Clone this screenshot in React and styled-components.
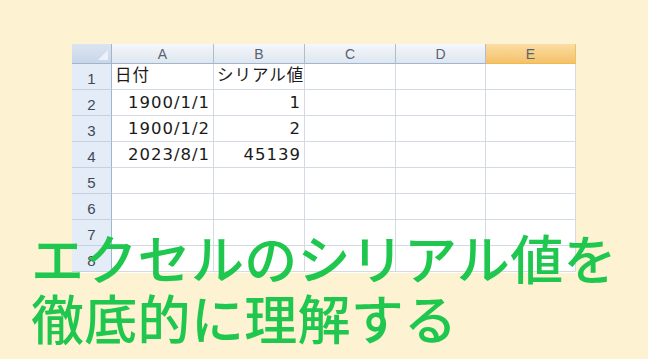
import React from "react"
import styled, { createGlobalStyle } from "styled-components"

const columns = ["A", "B", "C", "D", "E"]
const widths = [40, 102, 91, 91, 90, 90]

const rows = [
  [{ v: "日付" }, { v: "シリアル値" }],
  [{ v: "1900/1/1", right: true }, { v: "1", right: true }],
  [{ v: "1900/1/2", right: true }, { v: "2", right: true }],
  [{ v: "2023/8/1", right: true }, { v: "45139", right: true }],
  [],
  [],
  [],
  [],
]

const GlobalStyle = createGlobalStyle`
  body {
    margin: 0;
    background: #fdf3d3;
  }
`

export default function App() {
  return (
    <>
      <GlobalStyle />
      <Page>
        <Sheet>
          <Corner>
            <CornerMark />
          </Corner>
          {columns.map((c) => (
            <ColHead key={c} $active={c === "E"}>
              {c}
            </ColHead>
          ))}
          {rows.map((r, i) => (
            <React.Fragment key={i}>
              <RowHead>{i + 1}</RowHead>
              {columns.map((c, j) => (
                <Cell key={c} $right={r[j] && r[j].right}>
                  {r[j] ? r[j].v : ""}
                </Cell>
              ))}
            </React.Fragment>
          ))}
        </Sheet>
        <Title>
          エクセルのシリアル値を
          <br />
          徹底的に理解する
        </Title>
      </Page>
    </>
  )
}

const Page = styled.div`
  position: relative;
  width: 648px;
  height: 359px;
  padding: 44px 0 0 72px;
  box-sizing: border-box;
  overflow: hidden;
  background: #fdf3d3;
`

const Sheet = styled.div`
  display: grid;
  grid-template-columns: ${widths.map((w) => w + "px").join(" ")};
  grid-template-rows: 20px repeat(8, 26px);
  width: 504px;
  height: 229px;
  overflow: hidden;
  background: #fff;
  font-family: "Liberation Sans", "Noto Sans CJK JP", sans-serif;
`

const Corner = styled.div`
  position: relative;
  background: linear-gradient(#dbe4f1, #c9d6e8);
  border-right: 1px solid #9eb6ce;
  border-bottom: 1px solid #9eb6ce;
`

const CornerMark = styled.div`
  position: absolute;
  right: 3px;
  bottom: 3px;
  width: 0;
  height: 0;
  border-left: 10px solid transparent;
  border-bottom: 10px solid #eef2f8;
`

const ColHead = styled.div`
  display: flex;
  align-items: center;
  justify-content: center;
  font-size: 14px;
  color: #5a6270;
  background: ${(p) =>
    p.$active
      ? "linear-gradient(#fbdca3, #f3c26a)"
      : "linear-gradient(#f4f7fb, #dfe6ef)"};
  border-right: 1px solid ${(p) => (p.$active ? "#f1c15f" : "#b2bccb")};
  border-bottom: 1px solid ${(p) => (p.$active ? "#f2b84e" : "#9eb6ce")};
`

const RowHead = styled.div`
  display: flex;
  align-items: flex-end;
  justify-content: center;
  padding-bottom: 2px;
  font-size: 15px;
  color: #404856;
  background: #e4ecf7;
  border-right: 1px solid #9eb6ce;
  border-bottom: 1px solid #c5d1e2;
`

const Cell = styled.div`
  display: flex;
  align-items: flex-end;
  justify-content: ${(p) => (p.$right ? "flex-end" : "flex-start")};
  padding: 0 3px 3px;
  font-family: "DejaVu Sans", "Noto Sans CJK JP", sans-serif;
  font-size: 16.5px;
  letter-spacing: 1px;
  color: #1a1a1a;
  white-space: nowrap;
  border-right: 1px solid #d4dae3;
  border-bottom: 1px solid #d4dae3;
`

const Title = styled.h1`
  position: absolute;
  left: 31px;
  top: 227px;
  margin: 0;
  font-family: "Noto Sans CJK JP", sans-serif;
  font-weight: 500;
  font-size: 53px;
  line-height: 60px;
  letter-spacing: 0.3px;
  color: #1fc74e;
  white-space: nowrap;
`
